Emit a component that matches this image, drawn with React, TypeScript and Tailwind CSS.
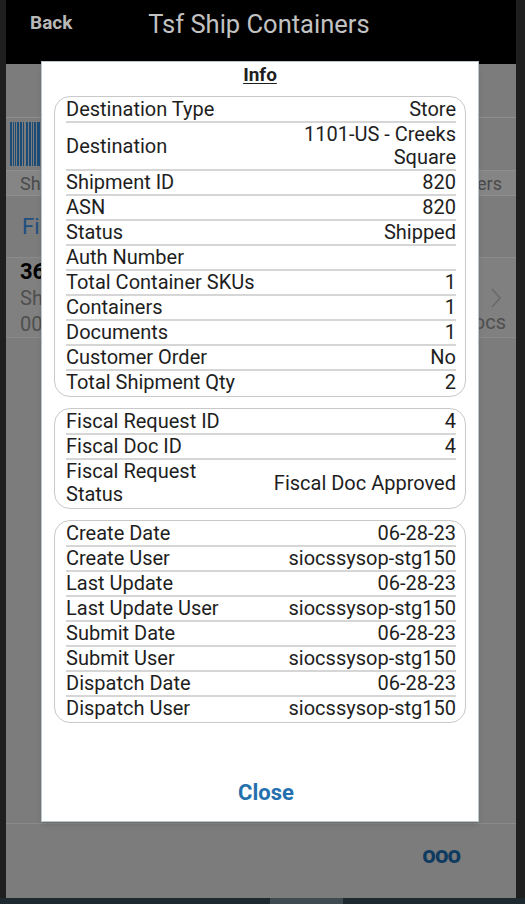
import React from 'react'

type Row = { label: string; value?: string; labelClass?: string; valueClass?: string }

const shipment: Row[] = [
  { label: 'Destination Type', value: 'Store' },
  { label: 'Destination', value: '1101-US - Creeks Square', valueClass: 'max-w-[170px]' },
  { label: 'Shipment ID', value: '820' },
  { label: 'ASN', value: '820' },
  { label: 'Status', value: 'Shipped' },
  { label: 'Auth Number', value: '' },
  { label: 'Total Container SKUs', value: '1' },
  { label: 'Containers', value: '1' },
  { label: 'Documents', value: '1' },
  { label: 'Customer Order', value: 'No' },
  { label: 'Total Shipment Qty', value: '2' },
]

const fiscal: Row[] = [
  { label: 'Fiscal Request ID', value: '4' },
  { label: 'Fiscal Doc ID', value: '4' },
  { label: 'Fiscal Request Status', value: 'Fiscal Doc Approved', labelClass: 'max-w-[160px]' },
]

const audit: Row[] = [
  { label: 'Create Date', value: '06-28-23' },
  { label: 'Create User', value: 'siocssysop-stg150' },
  { label: 'Last Update', value: '06-28-23' },
  { label: 'Last Update User', value: 'siocssysop-stg150' },
  { label: 'Submit Date', value: '06-28-23' },
  { label: 'Submit User', value: 'siocssysop-stg150' },
  { label: 'Dispatch Date', value: '06-28-23' },
  { label: 'Dispatch User', value: 'siocssysop-stg150' },
]

function Group({ rows }: { rows: Row[] }) {
  return (
    <div className="rounded-[16px] border border-[#c9c9c9] pl-[11px] pr-[9px] pt-px pb-[2px]">
      {rows.map((r, i) => (
        <div
          key={r.label}
          className={`flex items-center justify-between gap-3 ${i < rows.length - 1 ? 'border-b-2 border-[#d6d6d6]' : ''}`}
        >
          <span className={`leading-[23px] ${r.labelClass ?? ''}`}>{r.label}</span>
          <span className={`text-right leading-[23px] ${r.valueClass ?? ''}`}>{r.value}</span>
        </div>
      ))}
    </div>
  )
}

function Barcode() {
  const bars = [0, 3, 5, 7, 10, 13, 16, 19, 22, 24, 27]
  const widths = [2, 1, 1, 2, 2, 1, 2, 2, 1, 2, 3]
  return (
    <svg width="31" height="44" viewBox="0 0 31 44">
      {bars.map((x, i) => (
        <rect key={i} x={x} y="0" width={widths[i]} height="44" fill="#1b4c78" />
      ))}
    </svg>
  )
}

export default function App() {
  return (
    <div className="relative h-[904px] w-[525px] overflow-hidden bg-[#1f1f1f] font-['Roboto',sans-serif]">
      {/* page behind the dialog */}
      <div className="ml-[6px] flex h-[898px] w-[510px] flex-col bg-[#7c7c7c]">
        <div className="flex h-[64px] items-start bg-black pt-[5px]">
          <span className="ml-[24px] mt-[4px] text-[19px] font-bold text-[#b8b8b8]">Back</span>
          <span className="ml-[76px] text-[25.5px] text-[#c2c2c2]">Tsf Ship Containers</span>
        </div>
        <div className="h-[54px] border-b border-[#8e8e8e]" />
        <div className="flex h-[52px] items-center px-[4px]">
          <Barcode />
        </div>
        <div className="flex h-[26px] items-center justify-between border-y border-[#8e8e8e] bg-[#858585] pl-[14px] pr-[14px] text-[18px] text-[#4a4a4a]">
          <span>Shipment</span>
          <span>Containers</span>
        </div>
        <div className="flex h-[62px] items-center border-b border-[#8a8a8a] pl-[16px] text-[22px] text-[#1f4f80]">
          Filter
        </div>
        <div className="flex h-[80px] items-center border-b border-[#8a8a8a] bg-[#808080] pl-[14px] pr-[10px]">
          <div className="flex flex-1 flex-col leading-[26px]">
            <span className="text-[22px] font-bold text-black">3654</span>
            <span className="text-[20px] text-[#4f4f4f]">Shipped</span>
            <span className="text-[20px] text-[#4f4f4f]">0000</span>
          </div>
          <div className="flex flex-col items-end leading-[26px] text-[20px] text-[#4f4f4f]">
            <span>&nbsp;</span>
            <svg width="12" height="22" viewBox="0 0 12 22" className="mr-[4px]">
              <polyline points="2,2 10,11 2,20" fill="none" stroke="#6a6a6a" strokeWidth="1.6" />
            </svg>
            <span>1 Docs</span>
          </div>
        </div>
        <div className="flex-1" />
        <div className="flex h-[75px] items-center justify-end border-t border-[#8a8a8a] pr-[56px] pb-[12px]">
          <span className="text-[24px] font-bold tracking-[-1px] text-[#0f3b60]">ooo</span>
        </div>
      </div>
      <div className="flex h-[6px] bg-[#1c2a30]">
        <div className="ml-[270px] w-[73px] bg-[#3e4b51]" />
      </div>

      {/* dialog */}
      <div className="absolute left-[41px] top-[61px] flex h-[761px] w-[438px] flex-col border border-[#b9c6cc] bg-white px-[12px] pt-px text-[20px] text-[#1e1e1e] shadow-md">
        <div className="mb-[9px] text-center text-[19px] font-bold leading-[24px] underline underline-offset-2">Info</div>
        <div className="flex flex-col gap-[11px]">
          <Group rows={shipment} />
          <Group rows={fiscal} />
          <Group rows={audit} />
        </div>
        <div className="mt-auto pb-[15px] pl-[12px] text-center text-[22px] font-bold leading-[26px] text-[#2470ae]">Close</div>
      </div>
    </div>
  )
}
